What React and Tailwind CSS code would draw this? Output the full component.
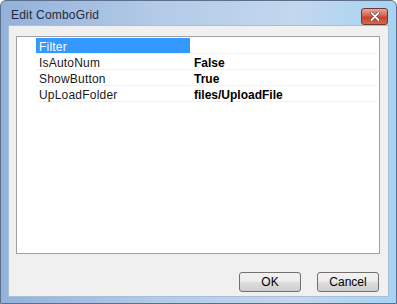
export default function App() {
  const rows = [
    { name: "Filter", value: "", selected: true },
    { name: "IsAutoNum", value: "False" },
    { name: "ShowButton", value: "True" },
    { name: "UpLoadFolder", value: "files/UploadFile" },
  ];
  return (
    <div
      className="w-[397px] h-[304px] flex flex-col border border-[#5d6f8a] rounded-t-[6px] bg-[linear-gradient(to_right,#93b1da,#b3cbe8_40%,#c3d7ee_75%,#a6d3f2)] overflow-hidden"
      style={{ fontFamily: '"Liberation Sans", Arial, sans-serif' }}
    >
      <div className="h-[24px] flex items-center justify-between pl-[10px] pr-[8px] shrink-0">
        <span className="text-[12px] text-[#1e2a3a] leading-none pt-[4px] tracking-[0.2px]">Edit ComboGrid</span>
        <div className="w-[27px] h-[17px] mt-[6px] rounded-[3px] border border-[#6e3a35] bg-[linear-gradient(to_bottom,#e8a89c,#d7614d_45%,#c8402a_55%,#d46a4f)] flex items-center justify-center">
          <svg width="10" height="9" viewBox="0 0 10 9">
            <path d="M1.5 1 L8.5 8 M8.5 1 L1.5 8" stroke="#5a2a24" strokeWidth="3" strokeLinecap="round" />
            <path d="M1.5 1 L8.5 8 M8.5 1 L1.5 8" stroke="#ffffff" strokeWidth="1.8" strokeLinecap="round" />
          </svg>
        </div>
      </div>
      <div className="flex-1 mx-[7px] mb-[6px] bg-[#f0f0f0] border border-[#a9bfd6] flex flex-col">
        <div className="mt-[10px] ml-[7px] mr-[8px] h-[218px] bg-white border border-[#a0a0a0] pl-[19px] pt-[1px] pr-[1px]">
          {rows.map((r) => (
            <div key={r.name} className="h-[16px] flex border-b border-[#f2f2f2] text-[12px] leading-[16px]">
              <div
                className={
                  "w-[154px] pl-[3px] tracking-[0.2px] " +
                  (r.selected ? "bg-[#3399ff] text-white" : "text-[#1a1a1a]")
                }
              >
                <span className="relative top-[1px]">{r.name}</span>
              </div>
              <div className="flex-1 pl-[4px] font-bold text-black">
                <span className="relative top-[1px]">{r.value}</span>
              </div>
            </div>
          ))}
        </div>
        <div className="flex justify-end gap-[16px] mt-[18px] mr-[9px]">
          <button className="w-[62px] h-[20px] rounded-[3px] border border-[#707070] bg-[linear-gradient(to_bottom,#f2f2f2,#ebebeb_50%,#dddddd_50%,#cfcfcf)] text-[12px] text-black leading-none">
            OK
          </button>
          <button className="w-[62px] h-[20px] rounded-[3px] border border-[#707070] bg-[linear-gradient(to_bottom,#f2f2f2,#ebebeb_50%,#dddddd_50%,#cfcfcf)] text-[12px] text-black leading-none">
            Cancel
          </button>
        </div>
      </div>
    </div>
  );
}
